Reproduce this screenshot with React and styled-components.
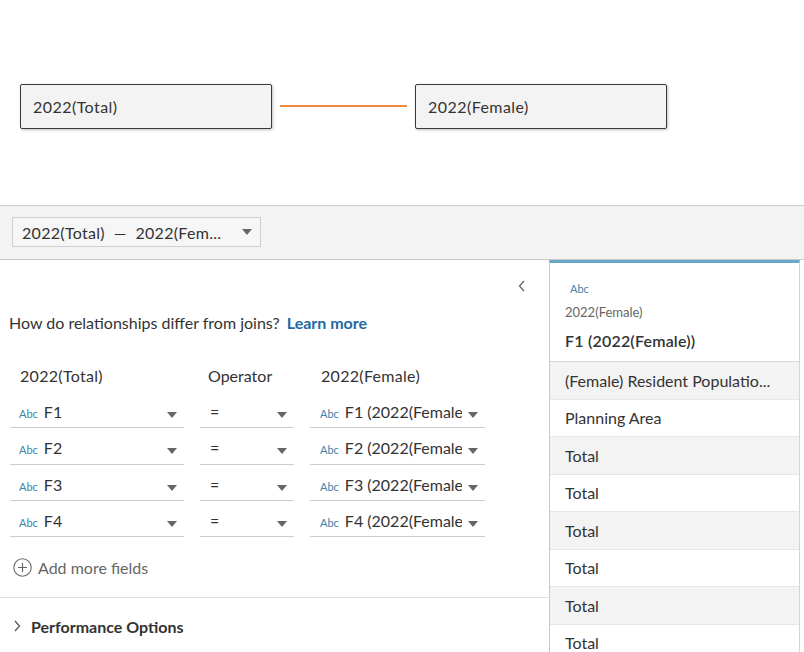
import React from "react";
import styled, { createGlobalStyle } from "styled-components";

const Global = createGlobalStyle`
  html, body { margin: 0; padding: 0; background: #fff; }
  body { font-family: Lato, "Open Sans", sans-serif; color: #333; font-size: 16px; }
  * { box-sizing: border-box; }
`;

const Page = styled.div`
  width: 804px;
  height: 652px;
  overflow: hidden;
  display: flex;
  flex-direction: column;
`;

const Canvas = styled.div`
  height: 205px;
  flex: none;
  display: flex;
  align-items: flex-start;
  padding: 84px 0 0 20px;
`;

const TableNode = styled.div`
  width: 252px;
  height: 45px;
  background: #f3f3f3;
  border: 1px solid #3a3a3a;
  border-radius: 2px;
  box-shadow: 1px 1px 3px rgba(0,0,0,0.25);
  display: flex;
  align-items: center;
  padding-left: 12px;
  font-size: 16px;
  letter-spacing: 0.45px;
  color: #333;
`;

const Link = styled.div`
  width: 127px;
  height: 2px;
  background: #ef8a3e;
  margin: 21px 8px 0;
`;

const Toolbar = styled.div`
  height: 55px;
  flex: none;
  background: #f3f3f3;
  border-top: 1px solid #c9c9c9;
  border-bottom: 1px solid #c9c9c9;
  padding: 11px 0 0 12px;
`;

const PairSelect = styled.div`
  width: 249px;
  height: 30px;
  border: 1px solid #cfcfcf;
  background: #f6f6f6;
  display: flex;
  align-items: center;
  padding: 0 8px 0 9px;
  font-size: 16px;
  letter-spacing: 0.3px;
  color: #333;
  justify-content: space-between;
  white-space: nowrap;
`;

const Caret = styled.span`
  width: 0;
  height: 0;
  border-left: 5px solid transparent;
  border-right: 5px solid transparent;
  border-top: 6px solid #666;
  flex: none;
  align-self: center;
`;

const Main = styled.div`
  flex: 1;
  display: flex;
  min-height: 0;
`;

const LeftPanel = styled.div`
  width: 549px;
  flex: none;
  display: flex;
  flex-direction: column;
`;

const CollapseRow = styled.div`
  height: 53px;
  display: flex;
  justify-content: flex-end;
  align-items: flex-start;
  padding: 19px 22px 0 0;
`;

const Question = styled.div`
  padding-left: 9px;
  font-size: 16px;
  color: #333;
  height: 26px;
  display: flex;
  align-items: center;
  white-space: nowrap;
`;

const LearnMore = styled.span`
  color: #2368a2;
  font-weight: 700;
  margin-left: 7px;
`;

const FieldGrid = styled.div`
  display: grid;
  grid-template-columns: 174px 94px 175px;
  column-gap: 16px;
  padding-left: 10px;
  margin-top: 27px;
`;

const HeadCell = styled.div`
  font-size: 16px;
  letter-spacing: ${(p) => p.$spacing || 0}px;
  color: #333;
  height: 26px;
  display: flex;
  align-items: center;
  padding-left: ${(p) => p.$inset}px;
  margin-bottom: 4px;
`;

const FieldCell = styled.div`
  height: ${(p) => p.$h}px;
  border-bottom: 1px solid #cccccc;
  display: flex;
  align-items: baseline;
  padding: 10px 7px 0 ${(p) => p.$inset}px;
  font-size: 16px;
  line-height: 20px;
  color: #333;
  gap: 6px;
`;

const AbcTag = styled.span`
  font-size: 11px;
  color: #3d83a8;
  flex: none;
`;

const FieldName = styled.span`
  flex: 1;
  min-width: 0;
  white-space: nowrap;
  overflow: hidden;
  text-overflow: clip;
`;

const AddMore = styled.div`
  display: flex;
  align-items: center;
  gap: 6px;
  padding-left: 13px;
  margin-top: 20px;
  height: 22px;
  color: #666;
  font-size: 16px;
`;

const Divider = styled.div`
  height: 1px;
  background: #dedede;
  margin-top: 19px;
`;

const Perf = styled.div`
  display: flex;
  align-items: center;
  gap: 9px;
  padding: 3px 0 0 12px;
  height: 58px;
  font-size: 16px;
  font-weight: 700;
  color: #333;
`;

const DataPanel = styled.div`
  width: 251px;
  flex: none;
  border-left: 1px solid #c9c9c9;
  border-right: 1px solid #d5d5d5;
  border-top: 3px solid #6aa8c8;
  display: flex;
  flex-direction: column;
`;

const ColHeader = styled.div`
  height: 99px;
  flex: none;
  border-bottom: 1px solid #d5d5d5;
  padding: 19px 0 0 15px;
  display: flex;
  flex-direction: column;
`;

const HeaderAbc = styled.div`
  font-size: 11px;
  color: #3d83a8;
  padding-left: 5px;
  height: 14px;
`;

const HeaderSource = styled.div`
  font-size: 13px;
  color: #666;
  margin-top: 8px;
  height: 16px;
`;

const HeaderName = styled.div`
  font-size: 16px;
  font-weight: 600;
  color: #333;
  margin-top: 11px;
  letter-spacing: 0.2px;
`;

const DataRow = styled.div`
  height: 37.5px;
  flex: none;
  background: ${(p) => (p.$shade ? "#f3f3f3" : "#fff")};
  border-bottom: 1px solid #e6e6e6;
  display: flex;
  align-items: center;
  padding-left: 15px;
  font-size: 16px;
  color: #333;
  white-space: nowrap;
`;

const Chevron = ({ dir }) => (
  <svg width="10" height="14" viewBox="0 0 10 14" fill="none">
    {dir === "left" ? (
      <path d="M7 2 L2.5 7 L7 12" stroke="#666" strokeWidth="1.3" />
    ) : (
      <path d="M3 2 L7.5 7 L3 12" stroke="#555" strokeWidth="1.3" />
    )}
  </svg>
);

const PlusCircle = () => (
  <svg width="19" height="19" viewBox="0 0 19 19" fill="none">
    <circle cx="9.5" cy="9.5" r="8.7" stroke="#666" strokeWidth="1.1" />
    <path d="M9.5 5 V14 M5 9.5 H14" stroke="#666" strokeWidth="1.2" />
  </svg>
);

const rows = [
  ["F1", "F1 (2022(Female))"],
  ["F2", "F2 (2022(Female))"],
  ["F3", "F3 (2022(Female))"],
  ["F4", "F4 (2022(Female))"],
];
const heights = [36, 37, 36, 36];

const data = [
  "(Female) Resident Populatio...",
  "Planning Area",
  "Total",
  "Total",
  "Total",
  "Total",
  "Total",
  "Total",
];

export default function App() {
  return (
    <Page>
      <Global />
      <Canvas>
        <TableNode>2022(Total)</TableNode>
        <Link />
        <TableNode>2022(Female)</TableNode>
      </Canvas>
      <Toolbar>
        <PairSelect>
          <span>2022(Total)&nbsp; —&nbsp; 2022(Fem...</span>
          <Caret />
        </PairSelect>
      </Toolbar>
      <Main>
        <LeftPanel>
          <CollapseRow>
            <Chevron dir="left" />
          </CollapseRow>
          <Question>
            How do relationships differ from joins?
            <LearnMore>Learn more</LearnMore>
          </Question>
          <FieldGrid>
            <HeadCell $inset={10} $spacing={0.3}>2022(Total)</HeadCell>
            <HeadCell $inset={8}>Operator</HeadCell>
            <HeadCell $inset={11} $spacing={0.3}>2022(Female)</HeadCell>
            {rows.map(([l, r], i) => (
              <React.Fragment key={l}>
                <FieldCell $h={heights[i]} $inset={9}>
                  <AbcTag>Abc</AbcTag>
                  <FieldName>{l}</FieldName>
                  <Caret />
                </FieldCell>
                <FieldCell $h={heights[i]} $inset={10}>
                  <FieldName>=</FieldName>
                  <Caret />
                </FieldCell>
                <FieldCell $h={heights[i]} $inset={10}>
                  <AbcTag>Abc</AbcTag>
                  <FieldName>{r}</FieldName>
                  <Caret />
                </FieldCell>
              </React.Fragment>
            ))}
          </FieldGrid>
          <AddMore>
            <PlusCircle />
            Add more fields
          </AddMore>
          <Divider />
          <Perf>
            <Chevron dir="right" />
            Performance Options
          </Perf>
        </LeftPanel>
        <DataPanel>
          <ColHeader>
            <HeaderAbc>Abc</HeaderAbc>
            <HeaderSource>2022(Female)</HeaderSource>
            <HeaderName>F1 (2022(Female))</HeaderName>
          </ColHeader>
          {data.map((d, i) => (
            <DataRow key={i} $shade={i % 2 === 0}>
              {d}
            </DataRow>
          ))}
        </DataPanel>
      </Main>
    </Page>
  );
}
